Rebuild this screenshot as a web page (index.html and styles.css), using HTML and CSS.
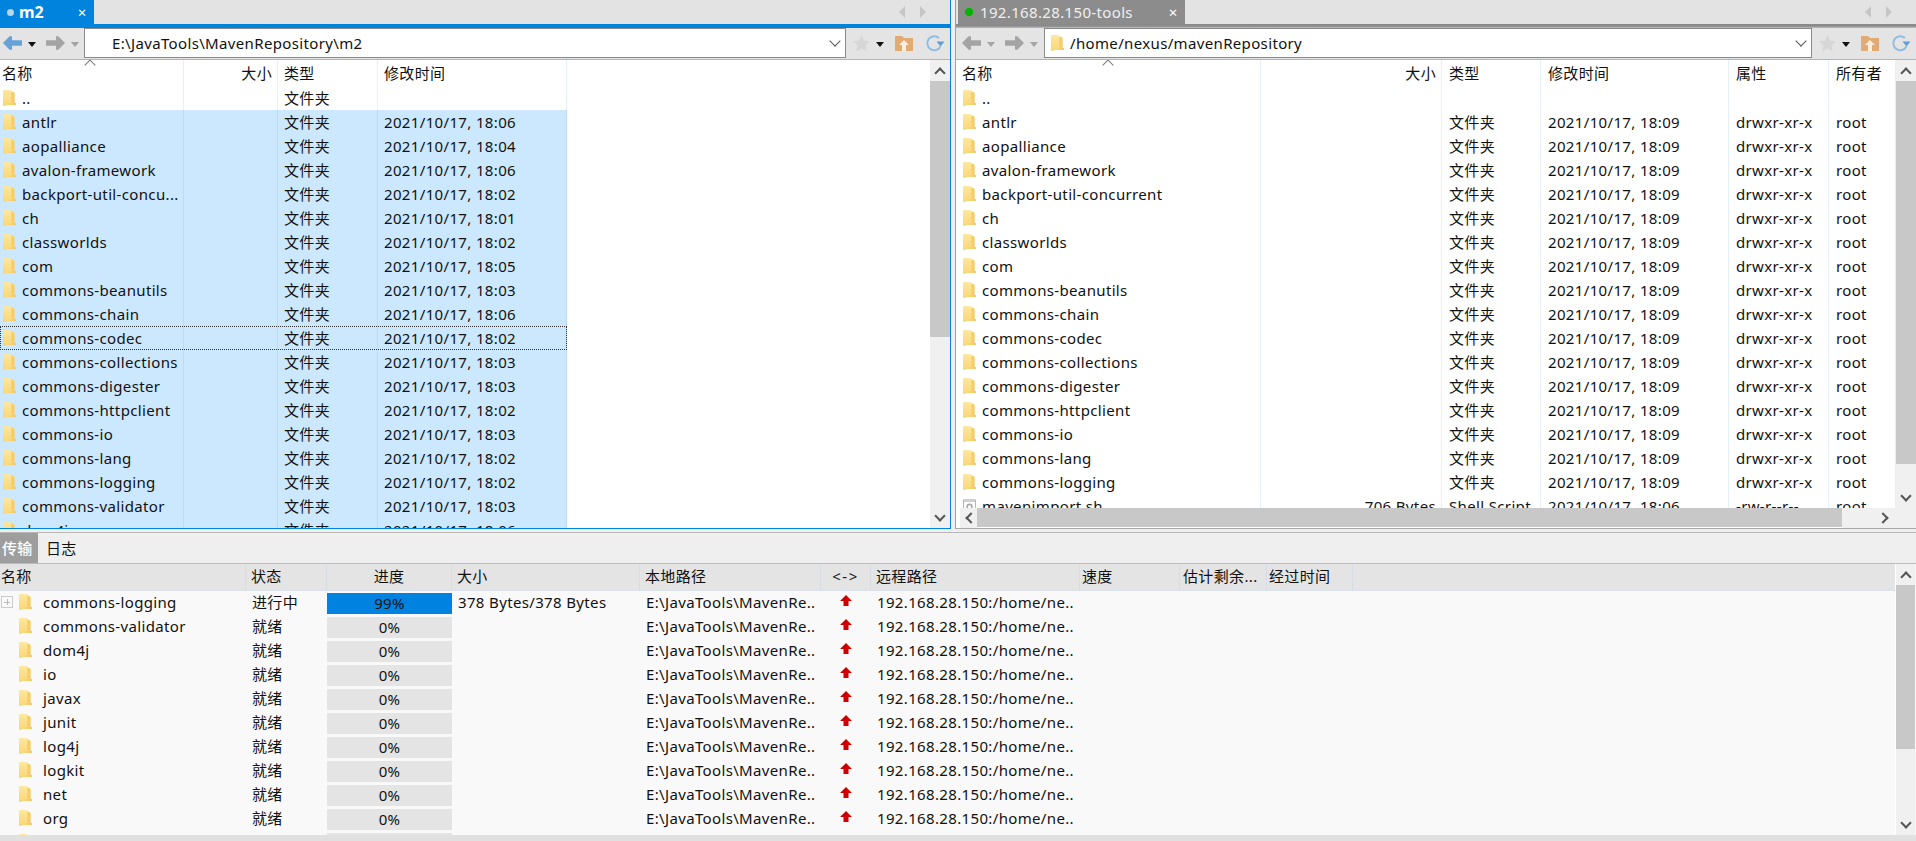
FILE: index.html
```html
<!DOCTYPE html>
<html lang="zh-CN">
<head>
<meta charset="utf-8">
<title>FTP transfer</title>
<link rel="stylesheet" href="styles.css">
</head>
<body>
<svg class="defs" width="0" height="0" aria-hidden="true">
  <defs>
    <linearGradient id="fg" x1="0" y1="0" x2="0" y2="1">
      <stop offset="0" stop-color="#fee7a0"/>
      <stop offset="1" stop-color="#f9d676"/>
    </linearGradient>
    <linearGradient id="fs" x1="0" y1="0" x2="1" y2="0">
      <stop offset="0" stop-color="#fbdc86"/>
      <stop offset="1" stop-color="#f4c65a"/>
    </linearGradient>
    <symbol id="folder" viewBox="0 0 13 16">
      <path d="M0 1 Q0 0 1 0 H7 L8 1 V2 H11.5 V13 H13 V15 H4 L2 16 H1 Q0 16 0 15 Z" fill="url(#fg)"/>
      <path d="M8 1 L11.5 3 V13 H13 V15 H4 L8 13 Z" fill="url(#fs)"/>
    </symbol>
    <symbol id="arrow" viewBox="0 0 20 14">
      <path d="M0 7 L7 0 H9.5 V4 H20 V10 H9.5 V14 H7 Z"/>
    </symbol>
    <symbol id="up" viewBox="0 0 12 11">
      <path d="M6 0 L12 6 H8.5 V11 H3.5 V6 H0 Z" fill="#d00000"/>
    </symbol>
    <symbol id="star" viewBox="0 0 18 18">
      <path d="M9 0 L11.6 6 L18 6.6 L13.2 11 L14.6 17.5 L9 14 L3.4 17.5 L4.8 11 L0 6.6 L6.4 6 Z" fill="#d6d6d6"/>
    </symbol>
    <symbol id="home" viewBox="0 0 18 16">
      <path d="M0 1 H7 L9 3 H18 V16 H0 Z" fill="#e3ab74"/>
      <path d="M9 5 L14 10 H11 V16 H7 V10 H4 Z" fill="#fbeedd"/>
    </symbol>
    <symbol id="refresh" viewBox="0 0 20 18">
      <path d="M15.5 12.5 A7 7 0 1 1 14 4" fill="none" stroke="#8fbde6" stroke-width="2"/>
      <path d="M11.5 7.5 H19.5 L15.5 12.5 Z" fill="#5e9fd8"/>
    </symbol>
    <symbol id="sh" viewBox="0 0 16 16">
      <path d="M.5 .5 H15.5 V15.5 H.5 Z" fill="#fff" stroke="#999"/>
      <path d="M1 1 H15 V3 H1 Z" fill="#ccc"/>
      <circle cx="8" cy="9" r="3" fill="none" stroke="#aaa" stroke-width="2"/>
    </symbol>
  </defs>
</svg>

<main class="app">
  <section class="panes">
    <div class="pane pane-left">
      <div class="tabs">
        <div class="tab tab-on"><i class="dot dot-on"></i><b class="tab-name">m2</b><span class="tab-x">×</span></div>
        <div class="tab-nav"><i class="tri tri-l"></i><i class="tri tri-r"></i></div>
      </div>
      <div class="rule rule-blue"></div>
      <div class="toolbar">
        <svg class="nav nav-blue"><use href="#arrow"/></svg>
        <i class="drop drop-dark"></i>
        <svg class="nav nav-gray flip"><use href="#arrow"/></svg>
        <i class="drop drop-gray"></i>
        <div class="addr addr-l"><span class="addr-text">E:\JavaTools\MavenRepository\m2</span><i class="chev"></i></div>
        <svg class="star"><use href="#star"/></svg>
        <i class="drop drop-dark"></i>
        <svg class="home"><use href="#home"/></svg>
        <svg class="refresh"><use href="#refresh"/></svg>
      </div>
      <div class="body">
        <div class="list cols-l">
          <i class="sort sort-l"></i>
          <div class="row head"><span class="c">名称</span><span class="c r">大小</span><span class="c">类型</span><span class="c">修改时间</span></div>
          <div class="row"><span class="c n"><svg class="fd"><use href="#folder"/></svg>..</span><span class="c"></span><span class="c">文件夹</span><span class="c"></span></div>
          <div class="row sel"><span class="c n"><svg class="fd"><use href="#folder"/></svg>antlr</span><span class="c"></span><span class="c">文件夹</span><span class="c">2021/10/17, 18:06</span></div>
          <div class="row sel"><span class="c n"><svg class="fd"><use href="#folder"/></svg>aopalliance</span><span class="c"></span><span class="c">文件夹</span><span class="c">2021/10/17, 18:04</span></div>
          <div class="row sel"><span class="c n"><svg class="fd"><use href="#folder"/></svg>avalon-framework</span><span class="c"></span><span class="c">文件夹</span><span class="c">2021/10/17, 18:06</span></div>
          <div class="row sel"><span class="c n"><svg class="fd"><use href="#folder"/></svg>backport-util-concu...</span><span class="c"></span><span class="c">文件夹</span><span class="c">2021/10/17, 18:02</span></div>
          <div class="row sel"><span class="c n"><svg class="fd"><use href="#folder"/></svg>ch</span><span class="c"></span><span class="c">文件夹</span><span class="c">2021/10/17, 18:01</span></div>
          <div class="row sel"><span class="c n"><svg class="fd"><use href="#folder"/></svg>classworlds</span><span class="c"></span><span class="c">文件夹</span><span class="c">2021/10/17, 18:02</span></div>
          <div class="row sel"><span class="c n"><svg class="fd"><use href="#folder"/></svg>com</span><span class="c"></span><span class="c">文件夹</span><span class="c">2021/10/17, 18:05</span></div>
          <div class="row sel"><span class="c n"><svg class="fd"><use href="#folder"/></svg>commons-beanutils</span><span class="c"></span><span class="c">文件夹</span><span class="c">2021/10/17, 18:03</span></div>
          <div class="row sel"><span class="c n"><svg class="fd"><use href="#folder"/></svg>commons-chain</span><span class="c"></span><span class="c">文件夹</span><span class="c">2021/10/17, 18:06</span></div>
          <div class="row sel focus"><span class="c n"><svg class="fd"><use href="#folder"/></svg>commons-codec</span><span class="c"></span><span class="c">文件夹</span><span class="c">2021/10/17, 18:02</span></div>
          <div class="row sel"><span class="c n"><svg class="fd"><use href="#folder"/></svg>commons-collections</span><span class="c"></span><span class="c">文件夹</span><span class="c">2021/10/17, 18:03</span></div>
          <div class="row sel"><span class="c n"><svg class="fd"><use href="#folder"/></svg>commons-digester</span><span class="c"></span><span class="c">文件夹</span><span class="c">2021/10/17, 18:03</span></div>
          <div class="row sel"><span class="c n"><svg class="fd"><use href="#folder"/></svg>commons-httpclient</span><span class="c"></span><span class="c">文件夹</span><span class="c">2021/10/17, 18:02</span></div>
          <div class="row sel"><span class="c n"><svg class="fd"><use href="#folder"/></svg>commons-io</span><span class="c"></span><span class="c">文件夹</span><span class="c">2021/10/17, 18:03</span></div>
          <div class="row sel"><span class="c n"><svg class="fd"><use href="#folder"/></svg>commons-lang</span><span class="c"></span><span class="c">文件夹</span><span class="c">2021/10/17, 18:02</span></div>
          <div class="row sel"><span class="c n"><svg class="fd"><use href="#folder"/></svg>commons-logging</span><span class="c"></span><span class="c">文件夹</span><span class="c">2021/10/17, 18:02</span></div>
          <div class="row sel"><span class="c n"><svg class="fd"><use href="#folder"/></svg>commons-validator</span><span class="c"></span><span class="c">文件夹</span><span class="c">2021/10/17, 18:03</span></div>
          <div class="row sel"><span class="c n"><svg class="fd"><use href="#folder"/></svg>dom4j</span><span class="c"></span><span class="c">文件夹</span><span class="c">2021/10/17, 18:06</span></div>
        </div>
        <div class="vbar">
          <i class="sb-btn"><i class="cv cv-u"></i></i>
          <i class="thumb thumb-l"></i>
          <i class="track"></i>
          <i class="sb-btn"><i class="cv cv-d"></i></i>
        </div>
      </div>
    </div>

    <div class="pane pane-right">
      <div class="tabs">
        <div class="tab tab-off"><i class="dot dot-live"></i><span class="tab-name2">192.168.28.150-tools</span><span class="tab-x">×</span></div>
        <div class="tab-nav"><i class="tri tri-l"></i><i class="tri tri-r"></i></div>
      </div>
      <div class="rule rule-gray"></div>
      <div class="toolbar">
        <svg class="nav nav-gray"><use href="#arrow"/></svg>
        <i class="drop drop-gray"></i>
        <svg class="nav nav-gray flip"><use href="#arrow"/></svg>
        <i class="drop drop-gray"></i>
        <div class="addr addr-r"><svg class="fd fd-addr"><use href="#folder"/></svg><span class="addr-text">/home/nexus/mavenRepository</span><i class="chev"></i></div>
        <svg class="star"><use href="#star"/></svg>
        <i class="drop drop-dark"></i>
        <svg class="home"><use href="#home"/></svg>
        <svg class="refresh"><use href="#refresh"/></svg>
      </div>
      <div class="body">
        <div class="main-r">
          <div class="list cols-r">
            <i class="sort sort-r"></i>
            <div class="row head"><span class="c">名称</span><span class="c r">大小</span><span class="c">类型</span><span class="c">修改时间</span><span class="c">属性</span><span class="c">所有者</span></div>
            <div class="row"><span class="c n"><svg class="fd"><use href="#folder"/></svg>..</span><span class="c"></span><span class="c"></span><span class="c"></span><span class="c"></span><span class="c"></span></div>
            <div class="row"><span class="c n"><svg class="fd"><use href="#folder"/></svg>antlr</span><span class="c"></span><span class="c">文件夹</span><span class="c">2021/10/17, 18:09</span><span class="c">drwxr-xr-x</span><span class="c">root</span></div>
            <div class="row"><span class="c n"><svg class="fd"><use href="#folder"/></svg>aopalliance</span><span class="c"></span><span class="c">文件夹</span><span class="c">2021/10/17, 18:09</span><span class="c">drwxr-xr-x</span><span class="c">root</span></div>
            <div class="row"><span class="c n"><svg class="fd"><use href="#folder"/></svg>avalon-framework</span><span class="c"></span><span class="c">文件夹</span><span class="c">2021/10/17, 18:09</span><span class="c">drwxr-xr-x</span><span class="c">root</span></div>
            <div class="row"><span class="c n"><svg class="fd"><use href="#folder"/></svg>backport-util-concurrent</span><span class="c"></span><span class="c">文件夹</span><span class="c">2021/10/17, 18:09</span><span class="c">drwxr-xr-x</span><span class="c">root</span></div>
            <div class="row"><span class="c n"><svg class="fd"><use href="#folder"/></svg>ch</span><span class="c"></span><span class="c">文件夹</span><span class="c">2021/10/17, 18:09</span><span class="c">drwxr-xr-x</span><span class="c">root</span></div>
            <div class="row"><span class="c n"><svg class="fd"><use href="#folder"/></svg>classworlds</span><span class="c"></span><span class="c">文件夹</span><span class="c">2021/10/17, 18:09</span><span class="c">drwxr-xr-x</span><span class="c">root</span></div>
            <div class="row"><span class="c n"><svg class="fd"><use href="#folder"/></svg>com</span><span class="c"></span><span class="c">文件夹</span><span class="c">2021/10/17, 18:09</span><span class="c">drwxr-xr-x</span><span class="c">root</span></div>
            <div class="row"><span class="c n"><svg class="fd"><use href="#folder"/></svg>commons-beanutils</span><span class="c"></span><span class="c">文件夹</span><span class="c">2021/10/17, 18:09</span><span class="c">drwxr-xr-x</span><span class="c">root</span></div>
            <div class="row"><span class="c n"><svg class="fd"><use href="#folder"/></svg>commons-chain</span><span class="c"></span><span class="c">文件夹</span><span class="c">2021/10/17, 18:09</span><span class="c">drwxr-xr-x</span><span class="c">root</span></div>
            <div class="row"><span class="c n"><svg class="fd"><use href="#folder"/></svg>commons-codec</span><span class="c"></span><span class="c">文件夹</span><span class="c">2021/10/17, 18:09</span><span class="c">drwxr-xr-x</span><span class="c">root</span></div>
            <div class="row"><span class="c n"><svg class="fd"><use href="#folder"/></svg>commons-collections</span><span class="c"></span><span class="c">文件夹</span><span class="c">2021/10/17, 18:09</span><span class="c">drwxr-xr-x</span><span class="c">root</span></div>
            <div class="row"><span class="c n"><svg class="fd"><use href="#folder"/></svg>commons-digester</span><span class="c"></span><span class="c">文件夹</span><span class="c">2021/10/17, 18:09</span><span class="c">drwxr-xr-x</span><span class="c">root</span></div>
            <div class="row"><span class="c n"><svg class="fd"><use href="#folder"/></svg>commons-httpclient</span><span class="c"></span><span class="c">文件夹</span><span class="c">2021/10/17, 18:09</span><span class="c">drwxr-xr-x</span><span class="c">root</span></div>
            <div class="row"><span class="c n"><svg class="fd"><use href="#folder"/></svg>commons-io</span><span class="c"></span><span class="c">文件夹</span><span class="c">2021/10/17, 18:09</span><span class="c">drwxr-xr-x</span><span class="c">root</span></div>
            <div class="row"><span class="c n"><svg class="fd"><use href="#folder"/></svg>commons-lang</span><span class="c"></span><span class="c">文件夹</span><span class="c">2021/10/17, 18:09</span><span class="c">drwxr-xr-x</span><span class="c">root</span></div>
            <div class="row"><span class="c n"><svg class="fd"><use href="#folder"/></svg>commons-logging</span><span class="c"></span><span class="c">文件夹</span><span class="c">2021/10/17, 18:09</span><span class="c">drwxr-xr-x</span><span class="c">root</span></div>
            <div class="row"><span class="c n"><svg class="fd"><use href="#sh"/></svg>mavenimport.sh</span><span class="c r">706 Bytes</span><span class="c">Shell Script</span><span class="c">2021/10/17, 18:06</span><span class="c">-rw-r--r--</span><span class="c">root</span></div>
          </div>
          <div class="vbar">
            <i class="sb-btn"><i class="cv cv-u"></i></i>
            <i class="thumb thumb-r"></i>
            <i class="track"></i>
            <i class="sb-btn"><i class="cv cv-d"></i></i>
          </div>
        </div>
        <div class="hbar">
          <i class="hb-btn"><i class="cv cv-l"></i></i>
          <i class="hthumb"></i>
          <i class="hb-btn hb-end"><i class="cv cv-r"></i></i>
        </div>
      </div>
    </div>
  </section>

  <section class="queue">
    <div class="qtabs"><span class="qtab qtab-on">传输</span><span class="qtab">日志</span></div>
    <div class="qmain">
      <div class="qlist">
        <div class="qrow qhead"><span class="q">名称</span><span class="q">状态</span><span class="q ctr">进度</span><span class="q">大小</span><span class="q">本地路径</span><span class="q ctr dirhead">&lt;-&gt;</span><span class="q">远程路径</span><span class="q">速度</span><span class="q">估计剩余...</span><span class="q">经过时间</span></div>
        <div class="qrow"><span class="q qn"><i class="plus"></i><svg class="fd"><use href="#folder"/></svg>commons-logging</span><span class="q">进行中</span><span class="bar bar-on">99%</span><span class="q">378 Bytes/378 Bytes</span><span class="q">E:\JavaTools\MavenRe..</span><span class="q dir"><svg class="up"><use href="#up"/></svg></span><span class="q">192.168.28.150:/home/ne..</span></div>
        <div class="qrow"><span class="q qn"><i class="noplus"></i><svg class="fd"><use href="#folder"/></svg>commons-validator</span><span class="q">就绪</span><span class="bar">0%</span><span class="q"></span><span class="q">E:\JavaTools\MavenRe..</span><span class="q dir"><svg class="up"><use href="#up"/></svg></span><span class="q">192.168.28.150:/home/ne..</span></div>
        <div class="qrow"><span class="q qn"><i class="noplus"></i><svg class="fd"><use href="#folder"/></svg>dom4j</span><span class="q">就绪</span><span class="bar">0%</span><span class="q"></span><span class="q">E:\JavaTools\MavenRe..</span><span class="q dir"><svg class="up"><use href="#up"/></svg></span><span class="q">192.168.28.150:/home/ne..</span></div>
        <div class="qrow"><span class="q qn"><i class="noplus"></i><svg class="fd"><use href="#folder"/></svg>io</span><span class="q">就绪</span><span class="bar">0%</span><span class="q"></span><span class="q">E:\JavaTools\MavenRe..</span><span class="q dir"><svg class="up"><use href="#up"/></svg></span><span class="q">192.168.28.150:/home/ne..</span></div>
        <div class="qrow"><span class="q qn"><i class="noplus"></i><svg class="fd"><use href="#folder"/></svg>javax</span><span class="q">就绪</span><span class="bar">0%</span><span class="q"></span><span class="q">E:\JavaTools\MavenRe..</span><span class="q dir"><svg class="up"><use href="#up"/></svg></span><span class="q">192.168.28.150:/home/ne..</span></div>
        <div class="qrow"><span class="q qn"><i class="noplus"></i><svg class="fd"><use href="#folder"/></svg>junit</span><span class="q">就绪</span><span class="bar">0%</span><span class="q"></span><span class="q">E:\JavaTools\MavenRe..</span><span class="q dir"><svg class="up"><use href="#up"/></svg></span><span class="q">192.168.28.150:/home/ne..</span></div>
        <div class="qrow"><span class="q qn"><i class="noplus"></i><svg class="fd"><use href="#folder"/></svg>log4j</span><span class="q">就绪</span><span class="bar">0%</span><span class="q"></span><span class="q">E:\JavaTools\MavenRe..</span><span class="q dir"><svg class="up"><use href="#up"/></svg></span><span class="q">192.168.28.150:/home/ne..</span></div>
        <div class="qrow"><span class="q qn"><i class="noplus"></i><svg class="fd"><use href="#folder"/></svg>logkit</span><span class="q">就绪</span><span class="bar">0%</span><span class="q"></span><span class="q">E:\JavaTools\MavenRe..</span><span class="q dir"><svg class="up"><use href="#up"/></svg></span><span class="q">192.168.28.150:/home/ne..</span></div>
        <div class="qrow"><span class="q qn"><i class="noplus"></i><svg class="fd"><use href="#folder"/></svg>net</span><span class="q">就绪</span><span class="bar">0%</span><span class="q"></span><span class="q">E:\JavaTools\MavenRe..</span><span class="q dir"><svg class="up"><use href="#up"/></svg></span><span class="q">192.168.28.150:/home/ne..</span></div>
        <div class="qrow"><span class="q qn"><i class="noplus"></i><svg class="fd"><use href="#folder"/></svg>org</span><span class="q">就绪</span><span class="bar">0%</span><span class="q"></span><span class="q">E:\JavaTools\MavenRe..</span><span class="q dir"><svg class="up"><use href="#up"/></svg></span><span class="q">192.168.28.150:/home/ne..</span></div>
        <div class="qrow"><span class="q qn"><i class="noplus"></i><svg class="fd"><use href="#folder"/></svg></span><span class="q"></span><span class="bar"></span></div>
      </div>
      <div class="vbar vbar-q">
        <i class="sb-btn"><i class="cv cv-u"></i></i>
        <i class="thumb thumb-q"></i>
        <i class="track"></i>
        <i class="sb-btn"><i class="cv cv-d"></i></i>
      </div>
    </div>
    <div class="status"></div>
  </section>
</main>
</body>
</html>
```

FILE: styles.css
```css
* { box-sizing: border-box; }
html, body { margin: 0; height: 100%; overflow: hidden; }
body {
  background: #efefef;
  color: #111;
  font-family: "Noto Sans", "Noto Sans CJK SC", sans-serif;
  font-size: 15px;
  letter-spacing: .35px;
  line-height: 24px;
}
i { display: block; font-style: normal; flex: none; }
svg { display: block; flex: none; }
.defs { position: absolute; }

.app { width: 1916px; height: 841px; display: flex; flex-direction: column; }
.panes { height: 529px; flex: none; display: flex; justify-content: space-between; }
.pane { display: flex; flex-direction: column; }
.pane-left { width: 951px; border-right: 1px solid #0083dd; border-bottom: 1px solid #0083dd; }
.pane-right { width: 961px; border-left: 1px solid #a0a0a0; border-bottom: 1px solid #a8a8a8; }

/* tabs */
.tabs { height: 24px; flex: none; display: flex; align-items: stretch; background: #e3e3e3; }
.pane-right .tabs { padding-left: 2px; }
.tab { display: flex; align-items: center; color: #fff; }
.tab-on { width: 94px; background: #0083dd; padding-left: 7px; }
.tab-off { width: 227px; background: #8c8c8c; padding-left: 7px; }
.dot { width: 7px; height: 7px; border-radius: 50%; }
.dot-on { background: #b5d6ef; }
.dot-live { background: #00b400; width: 8px; height: 8px; }
.tab-name { margin-left: 5px; font-size: 16px; font-weight: 700; width: 56px; letter-spacing: 0; }
.tab-name2 { margin-left: 7px; width: 186px; color: #f0f0f0; }
.tab-x { font-size: 15px; line-height: 24px; width: 14px; text-align: center; letter-spacing: 0; }
.tab-nav { margin-left: auto; width: 53px; display: flex; align-items: center; gap: 15px; padding-left: 2px; }
.tri { width: 0; height: 0; border-style: solid; border-color: transparent; border-width: 6px 0; }
.tri-l { border-right: 6px solid #c6c6c6; }
.tri-r { border-left: 6px solid #c6c6c6; }
.rule { height: 4px; flex: none; }
.rule-blue { background: #0083dd; }
.rule-gray { background: linear-gradient(#8a8a8a, #8a8a8a 50%, #c0c0c0); }

/* toolbar */
.toolbar {
  height: 32px; flex: none; display: flex; align-items: center;
  background: #e4e4e4; border-bottom: 1px solid #b4b4b4; padding-bottom: 1px;
}
.pane-left .toolbar { padding-left: 3px; }
.pane-right .toolbar { padding-left: 6px; }
.nav { width: 19px; height: 14px; }
.nav-blue { fill: #64a2d8; }
.nav-gray { fill: #a4a4a4; }
.flip { transform: scaleX(-1); }
.drop { width: 0; height: 0; margin: 0 7px; border-style: solid; border-color: transparent; border-width: 5px 4px 0; margin-top: 2px; }
.drop-dark { border-top-color: #111; }
.drop-gray { border-top-color: #a4a4a4; }
.toolbar .nav + .drop { margin-right: 10px; }
.toolbar .drop { margin-left: 6px; }
.addr {
  height: 30px; background: #fff; border: 1px solid #8a8a8a;
  display: flex; align-items: center;
  margin-left: -4px; margin-right: 7px;
}
.addr-l { width: 762px; padding-left: 27px; margin-left: -5px; }
.addr-r { width: 768px; padding-left: 6px; }
.addr-text { flex: 1; }
.fd-addr { margin-right: 9px; }
.chev { width: 8px; height: 8px; border-right: 1.5px solid #555; border-bottom: 1.5px solid #555; transform: rotate(45deg); margin: -5px 6px 0 0; }
.star { width: 17px; height: 17px; }
.home { width: 18px; height: 16px; margin-left: 4px; }
.refresh { width: 20px; height: 18px; margin-left: 12px; }

/* lists */
.body { flex: 1; min-height: 0; display: flex; }
.pane-right .body { flex-direction: column; }
.main-r { height: 448px; flex: none; display: flex; }
.list { flex: 1; min-width: 0; height: 100%; overflow: hidden; background: #fff; position: relative; }
.cols-r { padding-left: 4px; }
.row { display: grid; height: 24px; line-height: 24px; white-space: nowrap; }
.cols-l .row { grid-template-columns: 184px 94px 100px 189px; width: 567px; }
.cols-r .row { grid-template-columns: 301px 181px 99px 188px 100px 67px; width: 936px; }
.row.head { height: 26px; line-height: 26px; }
.c { display: flex; align-items: center; padding-left: 6px; border-right: 1px solid #e6f0f9; overflow: hidden; min-width: 0; }
.cols-r .c { padding-left: 7px; }
.c.r, .cols-r .c.r { justify-content: flex-end; padding-right: 5px; padding-left: 0; }
.c.n, .cols-r .c.n { padding-left: 3px; }
.head .c:first-child, .cols-r .head .c:first-child { padding-left: 2px; }
.fd { width: 13px; height: 16px; margin-right: 6px; }
.sel { background: #cce8ff; }
.sel .c { border-right-color: #bcdcf5; }
.focus { outline: 1px dotted #333; outline-offset: -1px; }
.sort { position: absolute; top: 0; width: 8px; height: 8px; border-top: 1px solid #777; border-left: 1px solid #777; transform: rotate(45deg); }
.sort-l { left: 86px; top: 1px; }
.sort-r { left: 148px; top: 1px; }

/* scrollbars */
.vbar { width: 20px; flex: none; display: flex; flex-direction: column; background: #f0f0f0; }
.sb-btn { height: 21px; display: flex; align-items: center; justify-content: center; }
.thumb { background: #c8c8c8; }
.thumb-l { height: 256px; }
.thumb-r { height: 383px; }
.thumb-q { height: 164px; }
.track { flex: 1; }
.cv { width: 8px; height: 8px; border: 0 solid #555; border-width: 2.5px 0 0 2.5px; }
.cv-u { transform: rotate(45deg); margin-top: 4px; }
.cv-d { transform: rotate(225deg); margin-top: -4px; }
.cv-l { transform: rotate(-45deg); margin-left: 4px; }
.cv-r { transform: rotate(135deg); margin-right: 4px; }
.hbar { height: 20px; flex: none; display: flex; background: #fff; padding-left: 4px; }
.hb-btn { width: 17px; background: #f0f0f0; display: flex; align-items: center; justify-content: center; }
.hthumb { width: 865px; background: #c8c8c8; height: 19px; }
.hb-end { flex: 1; justify-content: flex-end; padding-right: 25px; }

/* queue */
.queue { flex: 1; min-height: 0; display: flex; flex-direction: column; margin-top: 3px; border-top: 1px solid #b8b8b8; }
.qtabs { height: 31px; flex: none; display: flex; align-items: stretch; border-bottom: 1px solid #bbb; background: #efefef; }
.qtab { padding: 0 8px 0 7px; line-height: 30px; margin-right: 1px; }
.qtab-on { width: 38px; padding: 0 0 0 2px; background: #9e9e9e; color: #fff; font-weight: 500; }
.qmain { flex: 1; min-height: 0; display: flex; background: #f9f9f9; }
.qlist { flex: 1; min-width: 0; overflow: hidden; }
.qrow { display: grid; grid-template-columns: 246px 81px 125px 188px 181px 50px 209px 100px 87px 86px; height: 24px; white-space: nowrap; }
.qhead { height: 27px; line-height: 26px; background: #e4e4e4; border-bottom: 1px solid #d8dfe8; }
.q { display: flex; align-items: center; padding-left: 6px; padding-bottom: 2px; overflow: hidden; min-width: 0; }
.qhead .q { padding-left: 5px; border-right: 1px solid #d5dde8; }
.qhead .q:first-child { padding-left: 1px; }
.qhead .q:nth-child(8) { padding-left: 2px; }
.qhead .q:nth-child(9) { padding-left: 3px; }
.qhead .q:nth-child(10) { padding-left: 2px; }
.ctr { justify-content: center; }
.qhead .ctr { padding-left: 0; }
.dirhead { letter-spacing: 1.5px; }
.qn { padding-left: 1px; }
.plus { width: 12px; height: 12px; margin-right: 6px; border: 1px solid #ccc; background: linear-gradient(#bbb, #bbb) center/6px 1px no-repeat, linear-gradient(#bbb, #bbb) center/1px 6px no-repeat; }
.noplus { width: 12px; height: 12px; margin-right: 6px; }
.qn .fd { margin-right: 11px; }
.bar { height: 21px; margin-top: 2px; background: #e4e4e4; text-align: center; line-height: 21px; }
.bar-on { background: #0083e0; }
.dir { justify-content: center; padding-left: 0; }
.up { width: 12px; height: 11px; margin-top: -4px; }
.vbar-q { background: #f0f0f0; margin-right: 1px; width: 20px; border-left: 1px solid #fff; }
.status { height: 6px; flex: none; background: #e0e0e0; }
```
